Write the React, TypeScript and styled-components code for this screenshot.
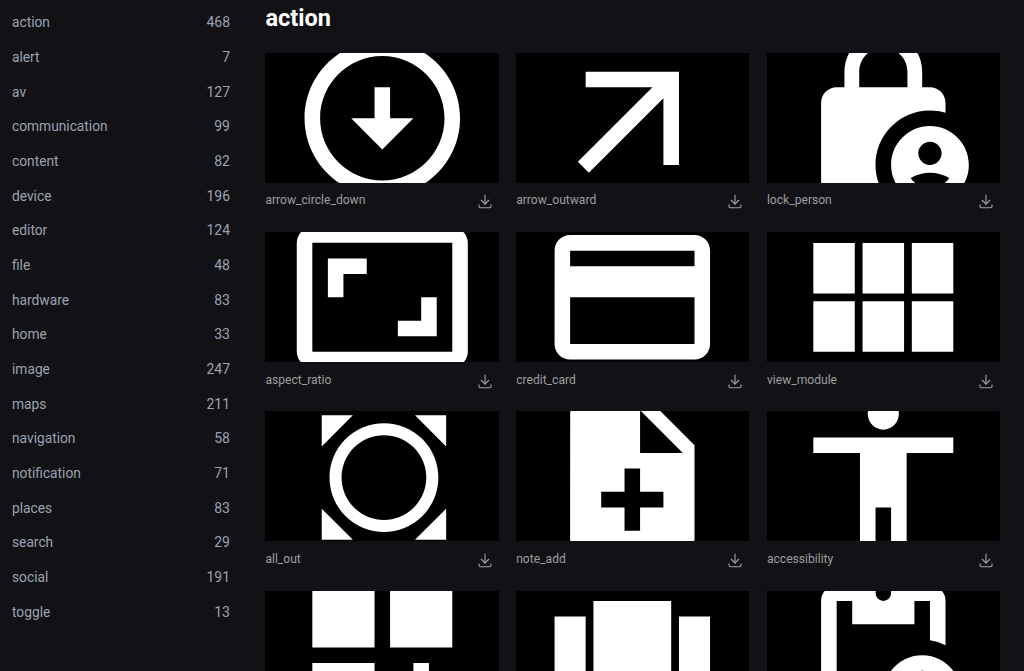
import React from 'react';
import styled, { createGlobalStyle } from 'styled-components';
import { TbDownload } from 'react-icons/tb';

const GlobalStyle = createGlobalStyle`
  html, body {
    margin: 0;
    padding: 0;
    background: #111116;
  }
`;

const Wrapper = styled.div`
  display: flex;
  height: 100vh;
  overflow: hidden;
  background: #111116;
  font-family: Roboto, "Liberation Sans", sans-serif;
`;

const Sidebar = styled.aside`
  flex: 0 0 242px;
  box-sizing: border-box;
  padding: 5.15px 12px 0;
`;

const CategoryList = styled.ul`
  list-style: none;
  margin: 0;
  padding: 0;
`;

const CategoryItem = styled.li`
  display: flex;
  justify-content: space-between;
  height: 34.7px;
  line-height: 34.7px;
  font-size: 14px;
  color: #9ca3af;
`;

const CategoryName = styled.span`
  font-size: 13.75px;
`;

const Main = styled.main`
  flex: 1;
  min-width: 0;
  padding: 0 23.8px 0 23.4px;
`;

const Title = styled.h1`
  margin: 0;
  height: 53px;
  padding-top: 4px;
  box-sizing: border-box;
  font-size: 23.5px;
  line-height: 28px;
  font-weight: 700;
  color: #fff;
`;

const Grid = styled.div`
  display: grid;
  grid-template-columns: repeat(3, 1fr);
  column-gap: 17.5px;
`;

const Card = styled.div`
  height: 179.2px;
`;

const Preview = styled.div`
  display: flex;
  align-items: center;
  justify-content: center;
  height: 130px;
  overflow: hidden;
  background: #000;
`;

const Glyph = styled.svg`
  flex-shrink: 0;
  width: 80%;
  aspect-ratio: 1;
  fill: #fff;
`;

const Caption = styled.div`
  display: flex;
  align-items: center;
  justify-content: space-between;
  height: 34.8px;
  font-size: 12.1px;
  color: #9e9e9e;
`;

const DownloadButton = styled.button`
  display: flex;
  padding: 2px 5px 0 0;
  border: 0;
  background: none;
  color: #a3a3a3;
`;

const categories: [string, number][] = [
  ['action', 468],
  ['alert', 7],
  ['av', 127],
  ['communication', 99],
  ['content', 82],
  ['device', 196],
  ['editor', 124],
  ['file', 48],
  ['hardware', 83],
  ['home', 33],
  ['image', 247],
  ['maps', 211],
  ['navigation', 58],
  ['notification', 71],
  ['places', 83],
  ['search', 29],
  ['social', 191],
  ['toggle', 13],
];

// material icon paths, last row is cut off by the window so it has no captions
const icons: { label?: string; d: string }[] = [
  {
    label: 'arrow_circle_down',
    d: 'M12,4c4.41,0,8,3.59,8,8s-3.59,8-8,8s-8-3.59-8-8S7.59,4,12,4 M12,2C6.48,2,2,6.48,2,12c0,5.52,4.48,10,10,10c5.52,0,10-4.48,10-10 C22,6.48,17.52,2,12,2L12,2z M13,12l0-4h-2l0,4H8l4,4l4-4H13z',
  },
  { label: 'arrow_outward', d: 'M6 6v2h8.59L5 17.59 6.41 19 16 9.41V18h2V6z' },
  {
    label: 'lock_person',
    d: 'M18,11c0.7,0,1.37,0.1,2,0.29V10c0-1.1-0.9-2-2-2h-1V6c0-2.76-2.24-5-5-5S7,3.24,7,6v2H6c-1.1,0-2,0.9-2,2v10 c0,1.1,0.9,2,2,2h6.26C11.47,20.87,11,19.49,11,18C11,14.13,14.13,11,18,11z M8.9,6c0-1.71,1.39-3.1,3.1-3.1s3.1,1.39,3.1,3.1v2H8.9V6z M18,13c-2.76,0-5,2.24-5,5s2.24,5,5,5s5-2.24,5-5S20.76,13,18,13z M18,15c0.83,0,1.5,0.67,1.5,1.5S18.83,18,18,18 s-1.5-0.67-1.5-1.5S17.17,15,18,15z M18,21c-1.03,0-1.94-0.52-2.48-1.32C16.25,19.26,17.09,19,18,19s1.75,0.26,2.48,0.68 C19.94,20.48,19.03,21,18,21z',
  },
  {
    label: 'aspect_ratio',
    d: 'M19 12h-2v3h-3v2h5v-5zM7 9h3V7H5v5h2V9zm14-6H3c-1.1 0-2 .9-2 2v14c0 1.1.9 2 2 2h18c1.1 0 2-.9 2-2V5c0-1.1-.9-2-2-2zm0 16.01H3V4.99h18v14.02z',
  },
  {
    label: 'credit_card',
    d: 'M20 4H4c-1.11 0-1.99.89-1.99 2L2 18c0 1.11.89 2 2 2h16c1.11 0 2-.89 2-2V6c0-1.11-.89-2-2-2zm0 14H4v-6h16v6zm0-10H4V6h16v2z',
  },
  {
    label: 'view_module',
    d: 'M14.67,5v6.5H9.33V5H14.67z M15.67,11.5H21V5h-5.33V11.5z M14.67,19v-6.5H9.33V19H14.67z M15.67,12.5V19H21v-6.5H15.67z M8.33,12.5H3V19h5.33V12.5z M8.33,11.5V5H3v6.5H8.33z',
  },
  {
    label: 'all_out',
    d: 'M16.21 4.16l4 4v-4zm4 12l-4 4h4zm-12 4l-4-4v4zm-4-12l4-4h-4zm12.95-.95c-2.73-2.73-7.17-2.73-9.9 0s-2.73 7.17 0 9.9 7.17 2.73 9.9 0 2.73-7.16 0-9.9zm-1.1 8.8c-2.13 2.13-5.57 2.13-7.7 0s-2.13-5.57 0-7.7 5.57-2.13 7.7 0 2.13 5.57 0 7.7z',
  },
  {
    label: 'note_add',
    d: 'M14 2H6c-1.1 0-1.99.9-1.99 2L4 20c0 1.1.89 2 1.99 2H18c1.1 0 2-.9 2-2V8l-6-6zm2 14h-3v3h-2v-3H8v-2h3v-3h2v3h3v2zm-3-7V3.5L18.5 9H13z',
  },
  {
    label: 'accessibility',
    d: 'M12 2c1.1 0 2 .9 2 2s-.9 2-2 2-2-.9-2-2 .9-2 2-2zm9 7h-6v13h-2v-6h-2v6H9V9H3V7h18v2z',
  },
  { d: 'M3 3h8v8H3zm10 0h8v8h-8zM3 13h8v8H3zm15 0h-2v3h-3v2h3v3h2v-3h3v-2h-3z' },
  { d: 'M2 7h4v10H2V7zm5 12h10V5H7v14zM18 7h4v10h-4V7z' },
  {
    d: 'M6 3h12a2 2 0 0 1 2 2v5.7a7 7 0 0 0-2-.63V5h-2v3H8V5H6v14h5v2H6a2 2 0 0 1-2-2V5a2 2 0 0 1 2-2zM12 3a1 1 0 1 0 .01 0zM17 12c-2.76 0-5 2.24-5 5s2.24 5 5 5 5-2.24 5-5-2.24-5-5-5zm0 2c.83 0 1.5.67 1.5 1.5S17.83 17 17 17s-1.5-.67-1.5-1.5.67-1.5 1.5-1.5zm0 6c-1.03 0-1.94-.52-2.48-1.32.73-.42 1.57-.68 2.48-.68s1.75.26 2.48.68C18.94 19.48 18.03 20 17 20z',
  },
];

const App: React.FC = () => {
  return (
    <Wrapper>
      <GlobalStyle />
      <Sidebar>
        <CategoryList>
          {categories.map(([name, count]) => (
            <CategoryItem key={name}>
              <CategoryName>{name}</CategoryName>
              <span>{count}</span>
            </CategoryItem>
          ))}
        </CategoryList>
      </Sidebar>

      <Main>
        <Title>action</Title>
        <Grid>
          {icons.map((icon) => (
            <Card key={icon.d}>
              <Preview>
                <Glyph viewBox="0 0 24 24">
                  <path fillRule="evenodd" d={icon.d} />
                </Glyph>
              </Preview>
              {icon.label && (
                <Caption>
                  <span>{icon.label}</span>
                  <DownloadButton>
                    <TbDownload size={18} strokeWidth={1.5} />
                  </DownloadButton>
                </Caption>
              )}
            </Card>
          ))}
        </Grid>
      </Main>
    </Wrapper>
  );
};

export default App;
